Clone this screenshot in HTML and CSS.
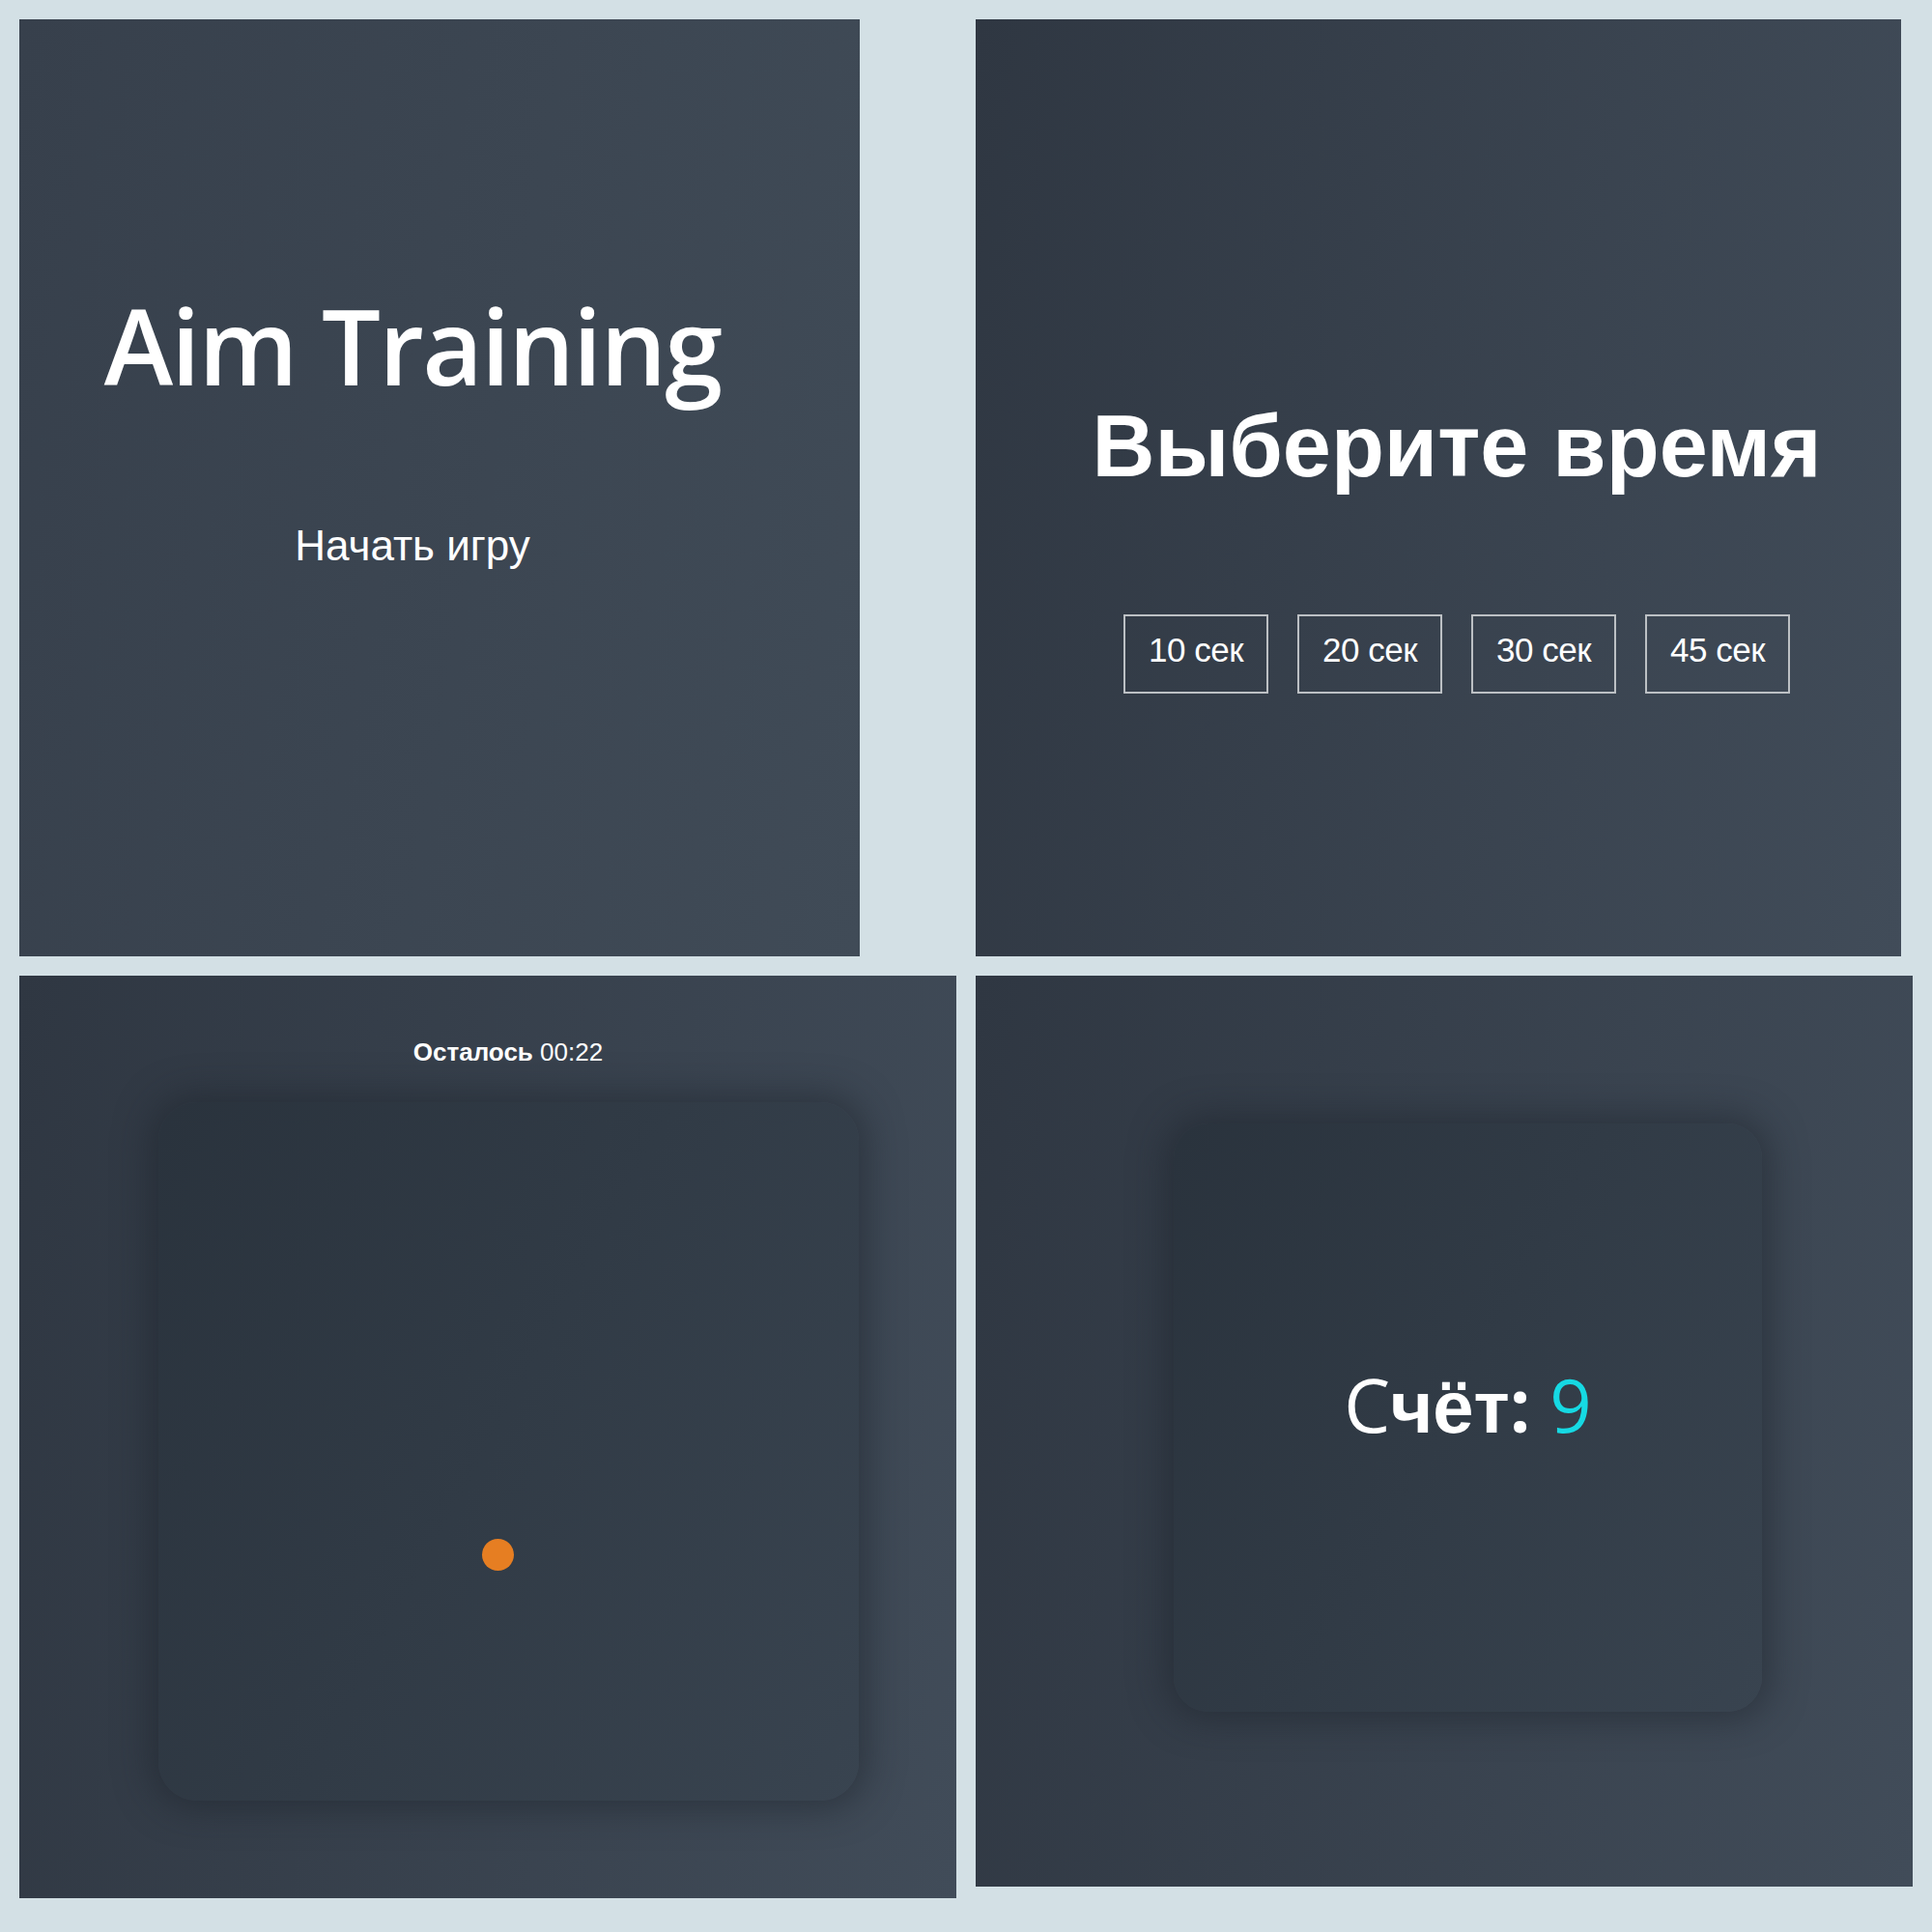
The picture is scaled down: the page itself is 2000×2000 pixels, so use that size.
FILE: index.html
```html
<!DOCTYPE html>
<html lang="ru">
<head>
<meta charset="utf-8">
<title>Aim Training</title>
<link rel="stylesheet" href="styles.css">
</head>
<body>
<main class="collage">
  <section class="screen screen-start">
    <h1 class="title">Aim Training</h1>
    <a href="#" class="start">Начать игру</a>
  </section>

  <section class="screen screen-time">
    <h2 class="time-title">Выберите время</h2>
    <ul class="time-list">
      <li><button class="time-btn">10 сек</button></li>
      <li><button class="time-btn">20 сек</button></li>
      <li><button class="time-btn">30 сек</button></li>
      <li><button class="time-btn">45 сек</button></li>
    </ul>
  </section>

  <section class="screen screen-game">
    <h3 class="timer"><b>Осталось</b> <span class="timer-value">00:22</span></h3>
    <div class="board board-game">
      <div class="circle"></div>
    </div>
  </section>

  <section class="screen screen-score">
    <div class="board board-score">
      <h1 class="score">С<span class="score-cyr">чёт</span><span class="score-colon">:</span> <span class="primary">9</span></h1>
    </div>
  </section>
</main>
</body>
</html>
```

FILE: styles.css
```css
* {
  box-sizing: border-box;
}

html, body {
  margin: 0;
  padding: 0;
}

body {
  background: #d3e0e5;
  color: #fff;
  font-family: "Liberation Sans", Arial, sans-serif;
}

.collage {
  display: grid;
  grid-template-columns: 970px 970px;
  grid-template-rows: 970px 955px;
  gap: 20px;
  padding: 20px;
  align-items: start;
  justify-items: start;
}

.screen {
  display: flex;
  flex-direction: column;
  align-items: center;
  background: linear-gradient(100deg, #2f3742 0%, #414c59 100%);
}

.screen-start {
  width: 870px;
  height: 970px;
  padding: 273px 56px 0 0;
  background: linear-gradient(100deg, #37404c 0%, #404b57 100%);
}

.title {
  margin: 0;
  font-family: "Open Sans", sans-serif;
  font-weight: 600;
  font-size: 108px;
  line-height: 1.2;
  letter-spacing: -1.8px;
}

.start {
  margin-top: 116px;
  font-size: 44px;
  line-height: 1.2;
  color: #fff;
  text-decoration: none;
}

.screen-time {
  width: 958px;
  height: 970px;
  padding: 388px 0 0 38px;
}

.time-title {
  margin: 0;
  font-size: 90px;
  font-weight: 700;
  line-height: 1.2;
}

.time-list {
  display: flex;
  gap: 30px;
  list-style: none;
  margin: 120px 0 0;
  padding: 0;
}

.time-btn {
  width: 150px;
  height: 82px;
  padding: 0 0 8px;
  background: transparent;
  border: 2px solid #bcc0c4;
  color: #fff;
  font-family: "Liberation Sans", Arial, sans-serif;
  font-size: 35px;
  line-height: 1.2;
  letter-spacing: -0.5px;
}

.screen-game {
  width: 970px;
  height: 955px;
  padding: 64px 0 0 42px;
}

.timer {
  margin: 0;
  font-size: 26px;
  font-weight: 400;
  line-height: 1.2;
}

.timer b {
  font-weight: 700;
}

.board {
  position: relative;
  border-radius: 40px;
  background: linear-gradient(118.38deg, #29323c -4.6%, #485563 200.44%);
  box-shadow: 0 0 36px 8px rgba(28, 34, 42, 0.5);
}

.board-game {
  width: 725px;
  height: 723px;
  margin-top: 36px;
}

.circle {
  position: absolute;
  left: 335px;
  top: 452px;
  width: 33px;
  height: 33px;
  border-radius: 50%;
  background: #e67e22;
}

.screen-score {
  width: 970px;
  height: 943px;
  padding: 153px 0 0 49px;
}

.board-score {
  width: 609px;
  height: 609px;
  border-radius: 36px;
  display: flex;
  align-items: center;
  justify-content: center;
  padding-bottom: 28px;
}

.score {
  margin: 0;
  font-family: "Open Sans", sans-serif;
  font-weight: 400;
  font-size: 76px;
  line-height: normal;
}

.score-cyr {
  font-family: "Liberation Sans", Arial, sans-serif;
  font-weight: 700;
}

.score-colon {
  font-weight: 700;
}

.primary {
  color: #16d9e3;
}
```
